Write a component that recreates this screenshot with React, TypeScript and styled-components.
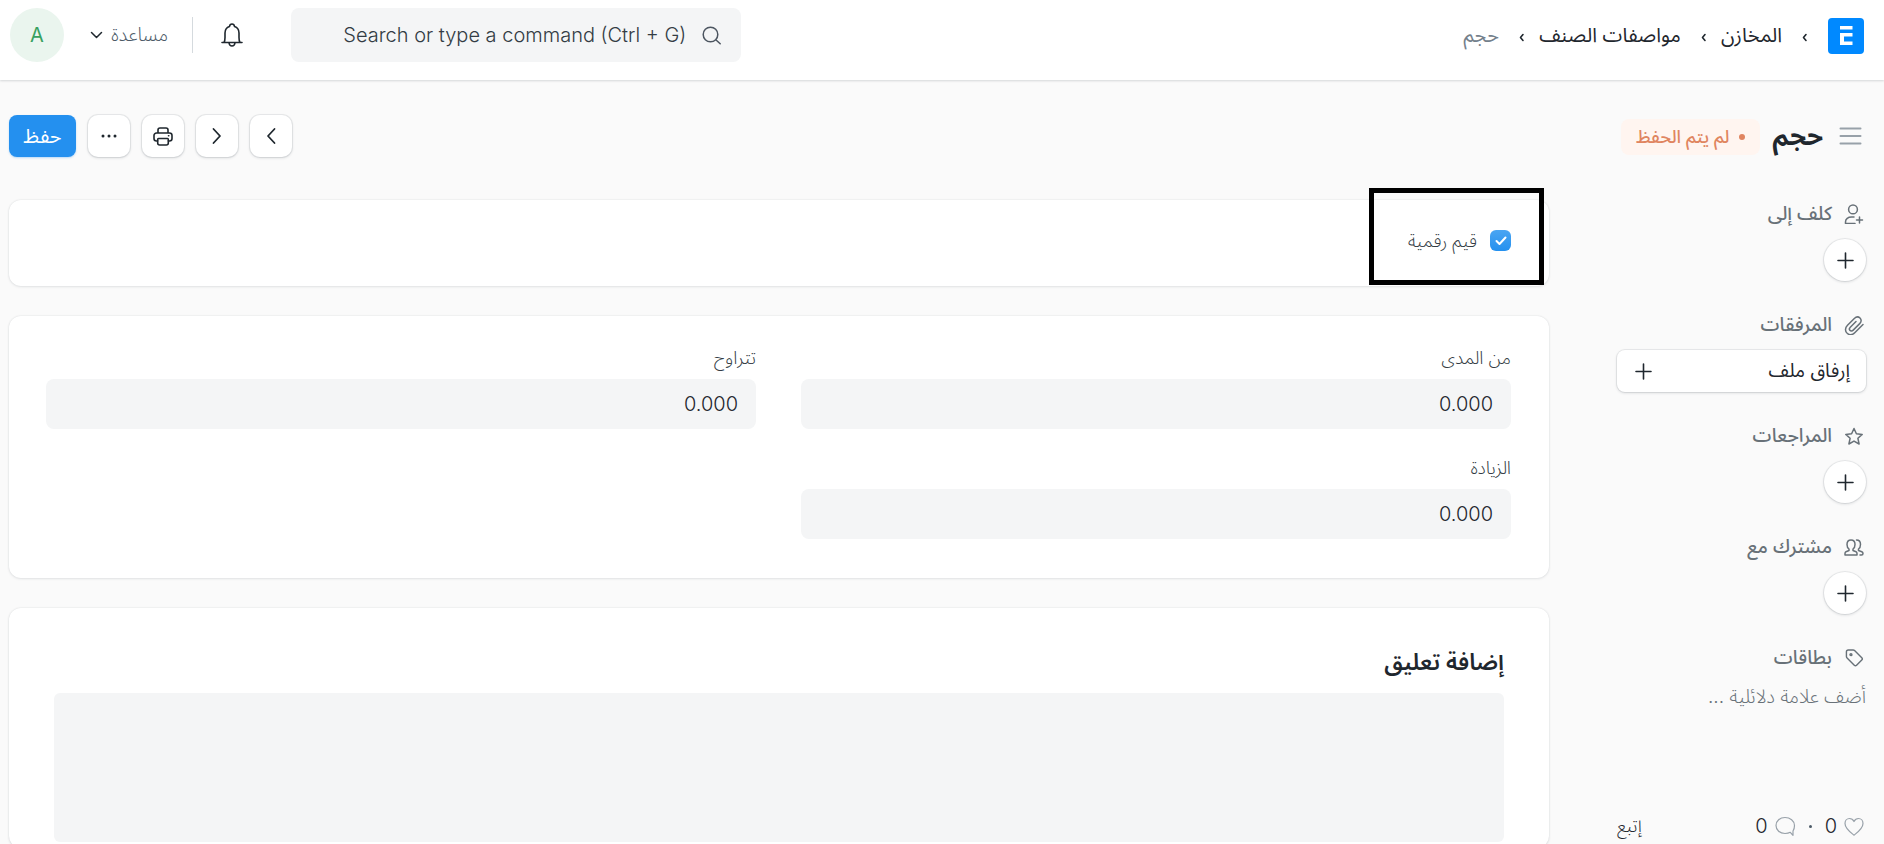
import React from "react";
import styled, { createGlobalStyle } from "styled-components";

const GlobalStyle = createGlobalStyle`
  *, *::before, *::after { box-sizing: border-box; }
  html, body { margin: 0; padding: 0; }
  body {
    background: #fafafa;
    color: #1f272e;
    font-family: Inter, "Noto Sans Arabic", "DejaVu Sans", sans-serif;
    font-size: 18px;
    line-height: 24px;
  }
  button, input, textarea { font: inherit; color: inherit; }
  button { cursor: pointer; }
  a { color: inherit; text-decoration: none; }
`;

const Page = styled.div`
  display: flex;
  flex-direction: column;
  height: 100vh;
  overflow: hidden;
`;

const Navbar = styled.header`
  display: flex;
  flex: none;
  justify-content: space-between;
  align-items: flex-start;
  height: 80px;
  padding: 8px 20px 0 10px;
  background: #fff;
  box-shadow: 0 1px 2px rgba(25, 39, 52, 0.16);
`;

const NavSide = styled.div`
  display: flex;
  align-items: center;
  height: 54px;
`;

const HomeLink = styled.a`
  padding-top: 2px;
  svg { display: block; }
`;

const Crumbs = styled.ol`
  display: flex;
  align-items: center;
  margin: 0;
  padding: 0 20px 0 0;
  list-style: none;
  font-size: 20px;
`;

const Crumb = styled.li<{ $current?: boolean }>`
  display: flex;
  align-items: center;
  color: ${(p) => (p.$current ? "#74808b" : "#1f272e")};
  svg { margin: 0 0 0 20px; color: #1f272e; }
  & + & { margin-right: 14px; }
`;

const SearchBox = styled.label`
  display: flex;
  align-items: center;
  gap: 16px;
  width: 450px;
  height: 54px;
  padding: 0 20px;
  border-radius: 8px;
  background: #f4f5f6;
  color: #4c5560;
`;

const SearchInput = styled.input`
  flex: 1;
  min-width: 0;
  padding: 0;
  border: 0;
  outline: 0;
  background: transparent;
  font-size: 20px;
  font-weight: 300;
  text-align: right;
  &::placeholder { color: #333c44; opacity: 1; }
`;

const BellButton = styled.button`
  display: flex;
  margin: 0 48px 0 28px;
  padding: 0;
  border: 0;
  background: transparent;
`;

const Divider = styled.span`
  width: 1px;
  height: 36px;
  background: #d5dade;
`;

const HelpButton = styled.button`
  display: flex;
  align-items: center;
  gap: 8px;
  margin: 0 24px 0 26px;
  padding: 0;
  border: 0;
  background: transparent;
  color: #4c5a67;
  font-size: 19px;
  font-weight: 300;
  svg { color: #1f272e; }
`;

const Avatar = styled.button`
  width: 54px;
  height: 54px;
  border: 0;
  border-radius: 50%;
  background: #eaf5ee;
  color: #38a160;
  font-size: 20px;
`;

const PageHead = styled.div`
  display: flex;
  flex: none;
  justify-content: space-between;
  align-items: center;
  padding: 35px 17px 0 9px;
`;

const TitleArea = styled.div`
  display: flex;
  align-items: center;
`;

const MenuToggle = styled.button`
  display: flex;
  padding: 0 5px;
  border: 0;
  background: transparent;
  color: #98a1a9;
`;

const Title = styled.h1`
  margin: 0 11px 0 12px;
  font-size: 26px;
  line-height: 32px;
  font-weight: 700;
`;

const Indicator = styled.span`
  display: flex;
  align-items: center;
  gap: 10px;
  height: 36px;
  margin-top: 2px;
  padding: 0 15px;
  border-radius: 8px;
  background: #fff5f0;
  color: #e08560;
  font-weight: 500;
  &::before {
    content: "";
    width: 6px;
    height: 6px;
    border-radius: 50%;
    background: currentColor;
  }
`;

const Actions = styled.div`
  display: flex;
  gap: 12px;
`;

const raised = "0 0 0 1px rgba(25, 39, 52, 0.07), 0 1px 3px rgba(25, 39, 52, 0.16)";

const IconButton = styled.button<{ $round?: boolean }>`
  display: flex;
  align-items: center;
  justify-content: center;
  width: 42px;
  height: 42px;
  padding: 0;
  border: 0;
  border-radius: ${(p) => (p.$round ? "50%" : "10px")};
  background: #fff;
  box-shadow: ${raised};
`;

const SaveButton = styled.button`
  width: 67px;
  height: 42px;
  padding: 0;
  border: 0;
  border-radius: 8px;
  background: #2490ef;
  box-shadow: 0 1px 2px rgba(36, 144, 239, 0.3);
  color: #fff;
  font-size: 20px;
`;

const Body = styled.div`
  display: flex;
  flex: 1;
  gap: 68px;
  min-height: 0;
  padding: 43px 18px 0 9px;
`;

const Sidebar = styled.aside`
  display: flex;
  flex: none;
  flex-direction: column;
  width: 249px;
  padding-bottom: 4px;
`;

const SideSection = styled.section`
  flex: none;
  height: 111px;
`;

const SideHeading = styled.h2`
  display: flex;
  align-items: center;
  gap: 12px;
  height: 28px;
  margin: 0 0 11px;
  padding-right: 2px;
  color: #687178;
  font-size: 19px;
  font-weight: 500;
`;

const AttachButton = styled.button`
  display: flex;
  align-items: center;
  justify-content: space-between;
  width: 100%;
  height: 42px;
  padding: 0 16px 0 18px;
  border: 0;
  border-radius: 8px;
  background: #fff;
  box-shadow: ${raised};
  font-size: 19px;
`;

const TagInput = styled.input`
  width: 100%;
  padding: 2px 0 0;
  border: 0;
  outline: 0;
  background: transparent;
  font-size: 19px;
  font-weight: 300;
  &::placeholder { color: #687178; opacity: 1; }
`;

const SideFooter = styled.div`
  display: flex;
  align-items: center;
  justify-content: space-between;
  height: 28px;
  margin-top: auto;
  padding-right: 2px;
`;

const Stats = styled.div`
  display: flex;
  align-items: center;
  gap: 7px;
  font-size: 20px;
`;

const StatButton = styled.button`
  display: flex;
  align-items: center;
  gap: 7px;
  padding: 0;
  border: 0;
  background: transparent;
  color: #1f272e;
  font-weight: 300;
  svg { color: #98a1a9; }
`;

const Dot = styled.span`
  width: 3px;
  height: 3px;
  margin: 0 6px;
  border-radius: 50%;
  background: #4c5a67;
`;

const FollowLink = styled.a`
  font-weight: 300;
`;

const Main = styled.main`
  display: flex;
  flex: 1;
  flex-direction: column;
  gap: 30px;
  min-width: 0;
`;

const Card = styled.section`
  position: relative;
  flex: none;
  padding: 30px 38px 39px 37px;
  border-radius: 12px;
  background: #fff;
  box-shadow: 0 0 2px rgba(25, 39, 52, 0.12), 0 1px 3px rgba(25, 39, 52, 0.08);
`;

const CheckCard = styled(Card)`
  display: flex;
  align-items: center;
  height: 86px;
  padding-top: 0;
  padding-bottom: 5px;
`;

const Highlight = styled.div`
  position: absolute;
  top: -12px;
  right: 5px;
  width: 175px;
  height: 97px;
  border: 5px solid #000;
  pointer-events: none;
`;

const CheckLabel = styled.label`
  display: flex;
  align-items: center;
  gap: 13px;
  color: #333c44;
  font-weight: 300;
`;

const CheckSlot = styled.span`
  display: grid;
  width: 21px;
  height: 21px;
  & > * { grid-area: 1 / 1; place-self: center; }
  svg { position: relative; color: #fff; pointer-events: none; }
`;

const Checkbox = styled.input`
  appearance: none;
  width: 21px;
  height: 21px;
  margin: 0;
  border: 1px solid #2490ef;
  border-radius: 6px;
  background: #fff;
  &:checked { background: linear-gradient(180deg, #4aa5f2, #2490ef) border-box; border-color: transparent; }
`;

const Fields = styled.div`
  display: grid;
  grid-template-columns: 1fr 1fr;
  gap: 27px 45px;
`;

const Field = styled.label`
  display: block;
  color: #333c44;
  font-weight: 300;
`;

const FieldName = styled.span`
  display: block;
  height: 24px;
  margin-bottom: 9px;
`;

const FieldInput = styled.input`
  display: block;
  width: 100%;
  height: 50px;
  padding: 0 18px;
  border: 0;
  border-radius: 8px;
  background: #f4f5f6;
  color: #1f272e;
  font-size: 20px;
`;

const CommentCard = styled(Card)`
  flex: 1 0 240px;
  padding: 38px 45px 0;
`;

const CommentTitle = styled.label`
  display: block;
  margin-bottom: 15px;
  font-size: 23px;
  line-height: 32px;
  font-weight: 600;
`;

const CommentBox = styled.textarea`
  display: block;
  width: 100%;
  height: 149px;
  padding: 12px;
  border: 0;
  border-radius: 6px;
  background: #f4f5f6;
  resize: none;
`;

type IconProps = { d: string; w?: number; h?: number; stroke?: number; box?: string };

const Icon = ({ d, w = 20, h = 20, stroke = 1.5, box }: IconProps) => (
  <svg
    width={w}
    height={h}
    viewBox={box ?? `0 0 ${w} ${h}`}
    fill="none"
    stroke="currentColor"
    strokeWidth={stroke}
    strokeLinecap="round"
    strokeLinejoin="round"
    aria-hidden="true"
  >
    <path d={d} />
  </svg>
);

const paths = {
  crumb: "M4 6.500L1.500 9.500l2.500 3",
  search: "M8.500 1.200a7.300 7.300 0 1 0 0 14.600a7.300 7.300 0 0 0 0-14.600M13.800 13.800l4.400 4",
  bell: "M1 19.500h20M3 19.500c1-1.500 1-3 1-5V10c0-3.500 1.700-5.600 4.500-6.500C8.700 2 9.700 1 11 1s2.300 1 2.500 2.500C16.300 4.400 18 6.500 18 10v4.500c0 2 0 3.500 1 5M8 20c.3 2 1.400 3 3 3s2.700-1 3-3",
  down: "M1.500 1.500L6.500 6.500l5-5",
  menu: "M1.500 1.500h20M1.500 9h20M1.500 16.500h20",
  left: "M8.500 2L2 9l6.500 7",
  right: "M1.500 2L8 9l-6.500 7",
  printer: "M5 6V3a2 2 0 0 1 2-2h6a2 2 0 0 1 2 2v3M5 14H3.500A2.500 2.500 0 0 1 1 11.500v-3A2.500 2.500 0 0 1 3.500 6h13A2.500 2.500 0 0 1 19 8.500v3a2.500 2.500 0 0 1-2.500 2.500H15M5.500 11.500h9a.8.8 0 0 1 .8.8V16a2 2 0 0 1-2 2H6.700a2 2 0 0 1-2-2v-3.700a.8.8 0 0 1 .8-.8zM15.500 8.800h.3",
  plus: "M8.500 1v15M1 8.500h15",
  assign: "M9 1a4.400 4.400 0 1 0 0 8.800a4.400 4.400 0 0 0 0-8.800M11 19.500H1.500v-1.500c0-3.200 2.600-5 6-5h2.500M15.500 13v6M12.500 16h6",
  clip: "M19 9.500l-8 8c-2.600 2.600-5.600 2.700-7.800.8c-2.400-2.200-2.200-5.500.3-8l6.800-6.800c1.900-1.900 4.200-1.900 5.700-.5c1.600 1.500 1.500 3.800-.3 5.600l-6.500 6.500c-1.100 1.100-2.400 1.100-3.200.3c-.8-.8-.8-2.100.3-3.200l5.700-5.700",
  star: "M9.500 1.500l2.400 5.300 5.800.6-4.300 3.900 1.200 5.700-5.100-2.900L4.400 17l1.200-5.700L1.300 7.400l5.800-.6z",
  shared: "M7 1c-2.500 0-4 1.800-4 4.500c0 2 .7 3.600 2 4.500v1.500l-3 1.200c-.8.4-1 1-1 1.800V16h12v-1.500c0-.8-.2-1.400-1-1.800l-3-1.200V10c1.300-.9 2-2.500 2-4.500C11 2.800 9.500 1 7 1M12.500 1c2.500 0 4 1.800 4 4.500c0 2-.7 3.600-2 4.500v1.500l3.300 1.200c.9.400 1.200 1 1.200 1.800c0 1-.5 1.500-1.500 1.500h-1.500",
  tag: "M1 3V8c0 .7.200 1.100.7 1.600l7.600 7.600c.8.800 1.600.8 2.400 0l5.500-5.500c.8-.8.8-1.600 0-2.400L9.600 1.700C9.100 1.200 8.700 1 8 1H3a2 2 0 0 0-2 2zM5.800 5a1 1 0 1 0 .01 2a1 1 0 0 0-.01-2",
  heart: "M10 18.200C6 15 1 11.500 1 6.500C1 3.500 3 1.500 5.500 1.500c2 0 3.500 1 4.500 3c1-2 2.500-3 4.500-3c2.500 0 4.500 2 4.500 5c0 5-5 8.500-9 11.700z",
  comment: "M10 1.500C5 1.500 1 4.800 1 9.500s4 8 9 8c2.300 0 3.800-.3 5.300-1.200l2.700 3V15c1-1.500 1.500-3.300 1.500-5.500c0-4.700-4.500-8-9.500-8z",
};

const CrumbMark = () => <Icon d={paths.crumb} w={6} h={14} stroke={1.6} />;

const Plus = () => <Icon d={paths.plus} w={17} h={17} stroke={1.6} />;

const SideBlock = ({ icon, title, children }: { icon: React.ReactNode; title: string; children: React.ReactNode }) => (
  <SideSection>
    <SideHeading>
      {icon}
      {title}
    </SideHeading>
    {children}
  </SideSection>
);

const NumberField = ({ name }: { name: string }) => (
  <Field>
    <FieldName>{name}</FieldName>
    <FieldInput defaultValue="0.000" inputMode="decimal" />
  </Field>
);

export default function App() {
  return (
    <Page dir="rtl" lang="ar">
      <GlobalStyle />
      <Navbar>
        <NavSide>
          <HomeLink href="#" aria-label="ERPNext">
            <svg width="36" height="36" viewBox="0 0 36 36" aria-hidden="true">
              <rect width="36" height="36" rx="4" fill="#0089ff" />
              <path d="M12 8h12.500v3.500H12zM12 15h12.500v3.500H16v5h8.500V27H12z" fill="#fff" />
            </svg>
          </HomeLink>
          <Crumbs>
            <Crumb>
              <CrumbMark />
              <a href="#">المخازن</a>
            </Crumb>
            <Crumb>
              <CrumbMark />
              <a href="#">مواصفات الصنف</a>
            </Crumb>
            <Crumb $current>
              <CrumbMark />
              <a href="#">حجم</a>
            </Crumb>
          </Crumbs>
        </NavSide>
        <NavSide>
          <SearchBox>
            <Icon d={paths.search} w={19} h={19} />
            <SearchInput type="text" dir="ltr" placeholder="Search or type a command (Ctrl + G)" />
          </SearchBox>
          <BellButton aria-label="الإشعارات">
            <Icon d={paths.bell} w={22} h={24} stroke={1.6} />
          </BellButton>
          <Divider />
          <HelpButton>
            مساعدة
            <Icon d={paths.down} w={13} h={8} />
          </HelpButton>
          <Avatar>A</Avatar>
        </NavSide>
      </Navbar>

      <PageHead>
        <TitleArea>
          <MenuToggle aria-label="القائمة">
            <Icon d={paths.menu} w={23} h={18} stroke={2} />
          </MenuToggle>
          <Title>حجم</Title>
          <Indicator>لم يتم الحفظ</Indicator>
        </TitleArea>
        <Actions>
          <IconButton aria-label="السابق">
            <Icon d={paths.left} w={10} h={18} stroke={1.8} />
          </IconButton>
          <IconButton aria-label="التالي">
            <Icon d={paths.right} w={10} h={18} stroke={1.8} />
          </IconButton>
          <IconButton aria-label="طباعة">
            <Icon d={paths.printer} w={20} h={19} stroke={1.6} />
          </IconButton>
          <IconButton aria-label="المزيد">
            <svg width="16" height="4" viewBox="0 0 16 4" fill="#1f272e" aria-hidden="true">
              <circle cx="2" cy="2" r="1.500" />
              <circle cx="8" cy="2" r="1.500" />
              <circle cx="14" cy="2" r="1.500" />
            </svg>
          </IconButton>
          <SaveButton>حفظ</SaveButton>
        </Actions>
      </PageHead>

      <Body>
        <Sidebar>
          <SideBlock icon={<Icon d={paths.assign} w={20} h={20} />} title="كلف إلى">
            <IconButton $round aria-label="كلف إلى">
              <Plus />
            </IconButton>
          </SideBlock>
          <SideBlock icon={<Icon d={paths.clip} w={20} h={20} />} title="المرفقات">
            <AttachButton>
              إرفاق ملف
              <Plus />
            </AttachButton>
          </SideBlock>
          <SideBlock icon={<Icon d={paths.star} w={20} h={18} box="-0.500 0 20 18" />} title="المراجعات">
            <IconButton $round aria-label="المراجعات">
              <Plus />
            </IconButton>
          </SideBlock>
          <SideBlock icon={<Icon d={paths.shared} w={20} h={17} />} title="مشترك مع">
            <IconButton $round aria-label="مشترك مع">
              <Plus />
            </IconButton>
          </SideBlock>
          <SideBlock icon={<Icon d={paths.tag} w={20} h={18} box="-1 0 20 19" />} title="بطاقات">
            <TagInput placeholder="أضف علامة دلائلية ..." aria-label="بطاقات" />
          </SideBlock>
          <SideFooter>
            <Stats>
              <StatButton>
                <Icon d={paths.heart} w={20} h={19} stroke={1.2} />0
              </StatButton>
              <Dot />
              <StatButton>
                <Icon d={paths.comment} w={21} h={20} stroke={1.2} />0
              </StatButton>
            </Stats>
            <FollowLink href="#">إتبع</FollowLink>
          </SideFooter>
        </Sidebar>

        <Main>
          <CheckCard>
            <CheckLabel>
              <CheckSlot>
                <Checkbox type="checkbox" defaultChecked />
                <Icon d="M1.500 5l3 3L10.500 1.500" w={12} h={10} stroke={2} />
              </CheckSlot>
              قيم رقمية
            </CheckLabel>
            <Highlight />
          </CheckCard>
          <Card>
            <Fields>
              <NumberField name="من المدى" />
              <NumberField name="تتراوح" />
              <NumberField name="الزيادة" />
            </Fields>
          </Card>
          <CommentCard>
            <CommentTitle htmlFor="comment">إضافة تعليق</CommentTitle>
            <CommentBox id="comment" />
          </CommentCard>
        </Main>
      </Body>
    </Page>
  );
}
